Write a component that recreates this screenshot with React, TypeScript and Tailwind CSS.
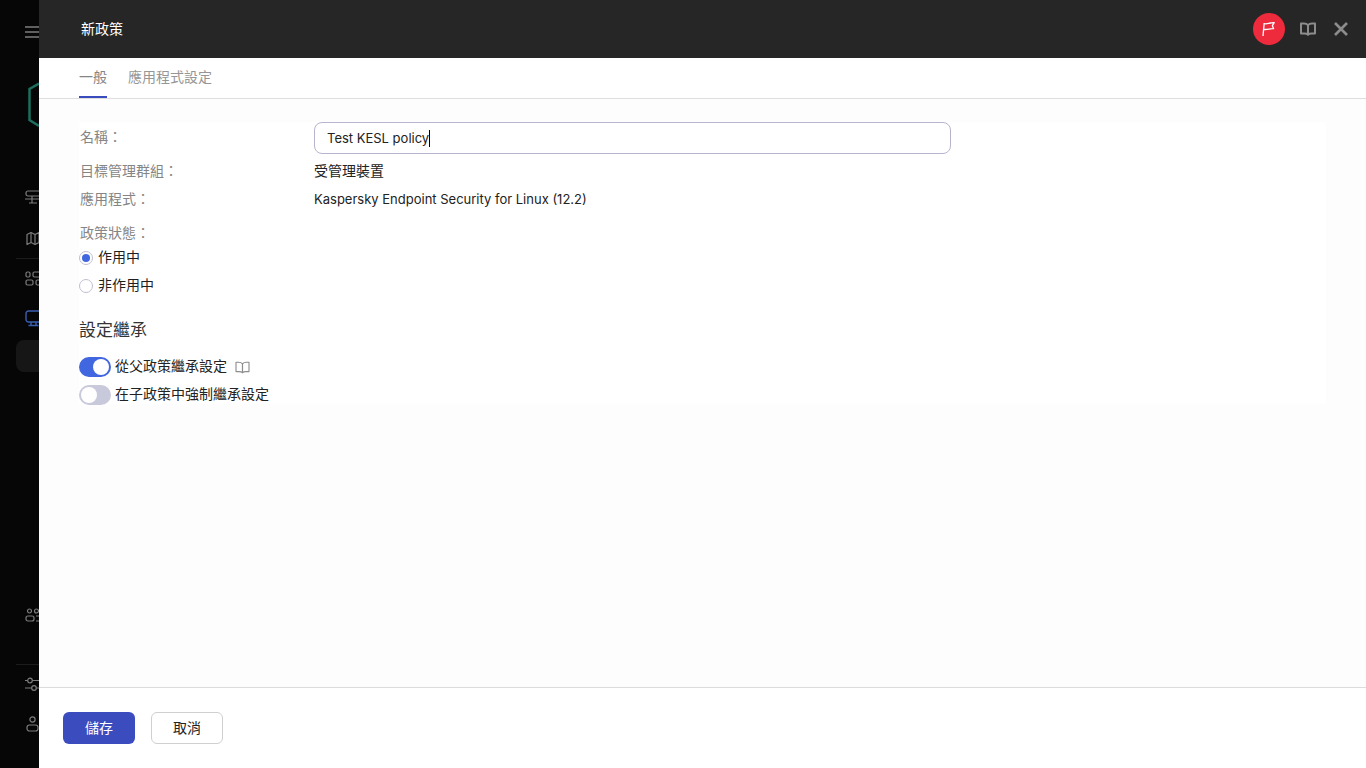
const font = 'font-["Inter","Noto_Sans_CJK_TC",sans-serif]';

function BookIcon({ className, strokeWidth = 1.6 }: { className: string; strokeWidth?: number }) {
    return (
        <svg viewBox="0 0 16 14" fill="none" stroke="currentColor" strokeWidth={strokeWidth} strokeLinejoin="round" className={className}>
            <path d="M8 3.2C7 2 5.6 1.4 4 1.4H1v10h3.4c1.5 0 2.7.4 3.6 1.2V3.2Z" />
            <path d="M8 3.2c1-1.2 2.4-1.8 4-1.8h3v10h-3.4c-1.5 0-2.7.4-3.6 1.2V3.2Z" />
        </svg>
    );
}

function Sidebar() {
    return (
        <div className="w-[39px] h-full shrink-0 bg-[#060606] overflow-hidden flex flex-col text-[#7d7d7d]">
            <div className="pl-[25px] pt-[25px] h-[82px]">
                <svg width="16" height="14" viewBox="0 0 16 14" fill="none" stroke="currentColor" strokeWidth="1.4">
                    <path d="M0 2h16M0 7h16M0 12h16" />
                </svg>
            </div>
            <div className="pl-[28px] h-[86px]">
                <svg width="24" height="46" viewBox="0 0 24 46" fill="none" className="text-[#1c6e5e]">
                    <path d="M11 1.5 1.5 7v31l9.5 6" stroke="currentColor" strokeWidth="2.5" />
                </svg>
            </div>
            <div className="pl-[25px] h-[41px] pt-[21px]">
                <svg width="16" height="16" viewBox="0 0 16 16" fill="none" stroke="currentColor" strokeWidth="1.2">
                    <rect x="1" y="2" width="16" height="5" rx="2" />
                    <path d="M0 10h18M7 7v7M4 14h8" />
                </svg>
            </div>
            <div className="pl-[26px] h-[49px] pt-[22px]">
                <svg width="14" height="15" viewBox="0 0 14 15" fill="none" stroke="currentColor" strokeWidth="1.2" strokeLinejoin="round">
                    <path d="M1 3.5 5 1.5l4 2 4-2v10l-4 2-4-2-4 2v-10Z" />
                    <path d="M5 1.5v10M9 3.5v10" />
                </svg>
            </div>
            <div className="ml-[16px] h-px bg-[#1c1c1c]" />
            <div className="pl-[25px] h-[40px] pt-[12px]">
                <svg width="18" height="16" viewBox="0 0 18 16" fill="none" stroke="currentColor" strokeWidth="1.2">
                    <rect x="1" y="1" width="4" height="5" rx="1.5" />
                    <rect x="8" y="1" width="9" height="5" rx="1.5" />
                    <rect x="1" y="9" width="7" height="5" rx="1.5" />
                    <rect x="11" y="9" width="6" height="5" rx="1.5" />
                </svg>
            </div>
            <div className="pl-[25px] h-[41px] pt-[11px] text-[#3a5fb0]">
                <svg width="18" height="17" viewBox="0 0 18 17" fill="none" stroke="currentColor" strokeWidth="1.4">
                    <rect x="1" y="1" width="15" height="11" rx="2.5" />
                    <path d="M6 12v3.5M11 12v3.5M3.5 15.5h10" />
                </svg>
            </div>
            <div className="ml-[16px] w-[40px] h-[32px] rounded-lg bg-[#161616]" />
            <div className="pl-[25px] mt-[235px] h-[57px]">
                <svg width="18" height="16" viewBox="0 0 18 16" fill="none" stroke="currentColor" strokeWidth="1.2">
                    <circle cx="4.5" cy="4" r="2" />
                    <circle cx="11.5" cy="4" r="2" />
                    <rect x="1" y="9" width="8" height="5" rx="2" />
                    <path d="M11 9h3a2 2 0 0 1 2 2v1a2 2 0 0 1-2 2h-3" />
                </svg>
            </div>
            <div className="ml-[16px] h-px bg-[#1c1c1c]" />
            <div className="pl-[25px] h-[40px] pt-[12px]">
                <svg width="18" height="16" viewBox="0 0 18 16" fill="none" stroke="currentColor" strokeWidth="1.2">
                    <circle cx="5" cy="3.5" r="2.3" />
                    <circle cx="9" cy="11" r="2.3" />
                    <path d="M0 3.5h2.7M7.3 3.5H18M0 11h6.7M11.3 11H18" />
                </svg>
            </div>
            <div className="pl-[26px] pt-[11px]">
                <svg width="13" height="16" viewBox="0 0 13 16" fill="none" stroke="currentColor" strokeWidth="1.2">
                    <circle cx="6.5" cy="3.5" r="2.6" />
                    <rect x="1" y="9" width="11" height="6" rx="2.5" />
                </svg>
            </div>
        </div>
    );
}

function Toggle({ on }: { on: boolean }) {
    return (
        <div className={`w-[32px] h-[20px] rounded-full p-[2px] flex ${on ? 'bg-[#4066e0] justify-end' : 'bg-[#c9c9dc] justify-start'}`}>
            <div className="w-[16px] h-[16px] rounded-full bg-white" />
        </div>
    );
}

function Radio({ on, label }: { on: boolean; label: string }) {
    return (
        <div className="flex items-center h-[28px] gap-[5px]">
            <div className="w-[14px] h-[14px] rounded-full border border-[#c0c0d2] bg-white flex items-center justify-center">
                {on && <div className="w-[8px] h-[8px] rounded-full bg-[#4066e0]" />}
            </div>
            <span className="text-[14px] text-[#1f1f1f] pb-[4px]">{label}</span>
        </div>
    );
}

function Row({ label, labelClass, children, className }: { label: string; labelClass: string; children: React.ReactNode; className: string }) {
    return (
        <div className={`flex items-center ${className}`}>
            <div className={`w-[235px] pl-px text-[14px] text-[#858585] ${labelClass}`}>{label}</div>
            {children}
        </div>
    );
}

export default function App() {
    return (
        <div className={`flex w-[1366px] h-[768px] overflow-hidden ${font}`}>
            <Sidebar />
            <div className="flex-1 flex flex-col bg-[#fdfdfd]">
                <div className="h-[58px] shrink-0 bg-[#262626] flex items-center pl-[42px] pr-[18px]">
                    <span className="text-[14px] text-white -mt-[2px]">新政策</span>
                    <div className="ml-auto flex items-center">
                        <div className="w-[32px] h-[32px] rounded-full bg-[#ee2b3c] flex items-center justify-center">
                            <svg width="18" height="18" viewBox="0 0 18 18" fill="none" stroke="white" strokeWidth="1.3" strokeLinejoin="round">
                                <path d="M3 16 4.2 3" />
                                <path d="M4.2 3.5c2.8 1.2 5.5-1.2 10-.8l-1.8 3 1.2 3c-3.4-.3-6.6 1.4-9.9.6" />
                            </svg>
                        </div>
                        <BookIcon className="ml-[15px] w-[16px] h-[14px] text-[#8c8c8c]" strokeWidth={2} />
                        <svg width="14" height="14" viewBox="0 0 14 14" stroke="currentColor" strokeWidth="2.6" className="ml-[18px] text-[#8c8c8c]">
                            <path d="M1 1l12 12M13 1 1 13" />
                        </svg>
                    </div>
                </div>
                <div className="h-[41px] shrink-0 bg-white border-b border-[#dedede] flex pl-[40px] gap-[21px]">
                    <div className="h-[40px] border-b-[2px] border-[#3b4cbf] text-[14px] text-[#858585] pt-[8px]">一般</div>
                    <div className="text-[14px] text-[#969696] pt-[8px]">應用程式設定</div>
                </div>
                <div className="flex-1 pl-[40px] pr-[40px] pt-[23px]">
                    <div className="bg-white h-[282px]">
                        <Row label="名稱：" labelClass="pb-[2px]" className="h-[31px]">
                            <div className="w-[637px] h-[32px] rounded-[8px] border border-[#b8b4cc] bg-white flex items-center pl-[12px] pt-[2px] text-[13px] text-[#222]">
                                Test KESL policy
                                <span className="w-px h-[17px] bg-black" />
                            </div>
                        </Row>
                        <Row label="目標管理群組：" labelClass="pb-[2px]" className="h-[28px] mt-[4px]">
                            <span className="text-[14px] text-[#222] pb-[2px]">受管理裝置</span>
                        </Row>
                        <Row label="應用程式：" labelClass="pb-[4px]" className="h-[28px] mt-px">
                            <span className="text-[13px] text-[#222]">Kaspersky Endpoint Security for Linux (12.2)</span>
                        </Row>
                        <div className="mt-[8px] h-[22px] pl-px text-[14px] text-[#858585]">政策狀態：</div>
                        <Radio on label="作用中" />
                        <Radio on={false} label="非作用中" />
                        <div className="mt-[16px] h-[28px] text-[17px] leading-[28px] text-[#333]">設定繼承</div>
                        <div className="mt-[9px] flex items-center h-[28px] gap-[4px]">
                            <Toggle on />
                            <span className="text-[14px] text-[#222] pb-[4px]">從父政策繼承設定</span>
                            <BookIcon className="ml-[4px] w-[15px] h-[13px] text-[#8c8c8c]" strokeWidth={1.2} />
                        </div>
                        <div className="flex items-center h-[28px] gap-[4px]">
                            <Toggle on={false} />
                            <span className="text-[14px] text-[#222] pb-[4px]">在子政策中強制繼承設定</span>
                        </div>
                    </div>
                </div>
                <div className="h-[81px] shrink-0 bg-white border-t border-[#dcdcdc] flex items-start pl-[24px] pt-[24px] gap-[16px]">
                    <button className="w-[72px] h-[32px] rounded-[6px] bg-[#3b4cbf] text-white text-[14px] pb-[2px]">儲存</button>
                    <button className="w-[72px] h-[32px] rounded-[6px] bg-white border border-[#cfcfcf] text-[#222] text-[14px] pb-[2px]">取消</button>
                </div>
            </div>
        </div>
    );
}
